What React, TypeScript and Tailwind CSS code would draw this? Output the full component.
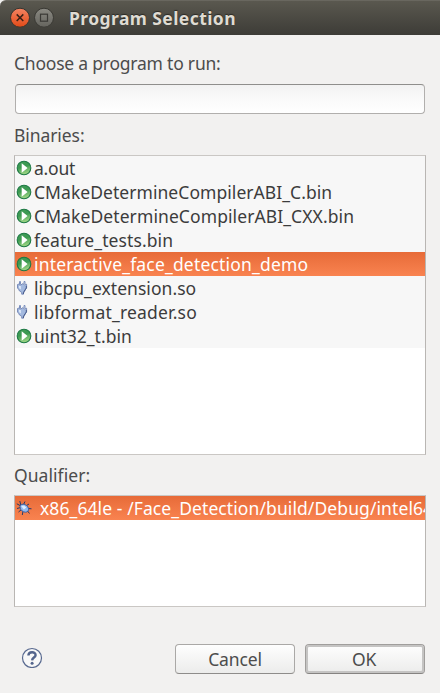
import { useId } from "react";

type Kind = "run" | "lib";
type Binary = { name: string; kind: Kind; spacing: string; selected?: boolean };

const binaries: Binary[] = [
  { name: "a.out", kind: "run", spacing: "tracking-[-0.2px]" },
  { name: "CMakeDetermineCompilerABI_C.bin", kind: "run", spacing: "tracking-[0.05px]" },
  { name: "CMakeDetermineCompilerABI_CXX.bin", kind: "run", spacing: "tracking-[0.09px]" },
  { name: "feature_tests.bin", kind: "run", spacing: "tracking-[0.1px]" },
  { name: "interactive_face_detection_demo", kind: "run", spacing: "tracking-[0.18px]", selected: true },
  { name: "libcpu_extension.so", kind: "lib", spacing: "tracking-[0.05px]" },
  { name: "libformat_reader.so", kind: "lib", spacing: "tracking-[0.2px]" },
  { name: "uint32_t.bin", kind: "run", spacing: "tracking-[0.05px]" },
];

function RunIcon() {
  const id = useId();
  return (
    <svg width="16" height="16" viewBox="0 0 16 16" className="shrink-0">
      <defs>
        <linearGradient id={id} x1="0" y1="0" x2="0.3" y2="1">
          <stop offset="0" stopColor="#3f9a58" />
          <stop offset="0.5" stopColor="#3c9a51" />
          <stop offset="1" stopColor="#9bd483" />
        </linearGradient>
      </defs>
      <circle cx="8" cy="8" r="6.8" fill={`url(#${id})`} stroke="#1d7944" strokeWidth="1.1" />
      <path d="M5.7 3.2 L11.6 8 L5.7 12.8 Z" fill="#fff" />
    </svg>
  );
}

function LibIcon() {
  return (
    <svg width="16" height="16" viewBox="0 0 16 16" className="shrink-0">
      <path
        d="M3.5 4 V1.5 H4.5 V4 M8 4 V1.5 H9 V4"
        fill="none"
        stroke="#7b8fbd"
      />
      <path
        d="M1.5 4.5 L3 4 L5 5 L6.2 3.8 L7.5 4 L8.5 5 L10.6 4.2 V8 L9.5 9.5 L8.5 11.5 L7.5 12 V14.2 H5.7 V12.3 L3.5 11 L2.6 9.3 L1.5 8 Z"
        fill="#a3b9df"
        stroke="#7386b4"
        strokeWidth="0.9"
      />
      <path d="M3 6 L4.8 6 V9.5 L3.2 8.2 Z" fill="#e2ecfb" />
      <path d="M10.3 6 V8 L8.2 11.2 L7.2 14" fill="none" stroke="#465989" />
    </svg>
  );
}

function BugIcon() {
  return (
    <svg width="16" height="16" viewBox="0 0 16 16" className="shrink-0">
      <path
        d="M4.8 5 L3.8 1 M7.5 4.5 L9 1.5 M4 5.5 L0.8 3.8 M4.5 7.5 L1 8.5 M5.5 9.5 L2.5 12 M7 11 L6.3 15 M10.5 5.5 L13 4 M12 8.5 L15.5 8.8 M11.5 11 L13.5 13.5"
        stroke="#243a6a"
        strokeWidth="1"
        fill="none"
      />
      <ellipse cx="8.3" cy="8.2" rx="4.7" ry="3.5" transform="rotate(38 8.3 8.2)" fill="#94b9ec" stroke="#3b5c9f" strokeWidth="0.9" />
      <path d="M5.2 5.9 L8 5.5 L10.4 7.6 L7.8 9.4 Z" fill="#dcedff" />
    </svg>
  );
}

const selectedRow = "bg-linear-to-b from-[#e76b38] to-[#f98350] text-white";

export default function App() {
  return (
    <div className="flex h-[693px] w-[440px] flex-col overflow-hidden bg-[#f2f1f0] font-['Noto_Sans',sans-serif] text-[17.5px] text-[#4c4c4c]">
      <header className="flex h-[35px] shrink-0 items-center rounded-tl-[6px] border-t border-[#69675f] bg-linear-to-b from-[#5a584f] to-[#3d3c37] pl-[10px]">
        <svg width="44" height="22" viewBox="0 0 44 22" className="shrink-0">
          <defs>
            <linearGradient id="close" x1="0" y1="0" x2="0" y2="1">
              <stop offset="0" stopColor="#f38463" />
              <stop offset="1" stopColor="#e34a17" />
            </linearGradient>
            <linearGradient id="max" x1="0" y1="0" x2="0" y2="1">
              <stop offset="0" stopColor="#8b8a83" />
              <stop offset="1" stopColor="#65645e" />
            </linearGradient>
          </defs>
          <circle cx="10" cy="10.7" r="9.5" fill="url(#close)" stroke="#37352f" />
          <path d="M6.7 7.4 L13.3 14 M13.3 7.4 L6.7 14" stroke="#3a2117" strokeWidth="1.5" />
          <circle cx="34" cy="10.7" r="9.5" fill="url(#max)" stroke="#3a3934" />
          <rect x="30.5" y="7.2" width="7" height="7" fill="none" stroke="#3b3a36" strokeWidth="1.2" />
        </svg>
        <h1 className="ml-[15px] whitespace-nowrap text-[17.5px] font-bold tracking-[0.42px] text-[#dfdbd2] [text-shadow:0_-1px_1px_#2b2a26]">
          Program Selection
        </h1>
      </header>

      <main className="flex flex-1 flex-col px-[14px]">
        <label className="mt-[16px] h-6 leading-6"><span className="tracking-[-0.22px]">Choose a program to run:</span></label>
        <input
          aria-label="Program"
          className="mx-px mt-[9px] h-[30px] shrink-0 rounded-[4px] border border-[#b1afad] border-t-[#8f8e8c] bg-linear-to-b from-[#f2f2f2] via-[#fafafa] to-white outline-none"
        />
        <div className="mt-[9px] h-6 leading-6"><span className="tracking-[-0.08px]">Binaries:</span></div>
        <ul className="mt-[8px] h-[300px] shrink-0 border border-[#b9b6b3] border-y-[#cac7c4] bg-white">
          {binaries.map((b) => (
            <li
              key={b.name}
              className={`flex h-6 items-center gap-[2px] pl-px leading-6 ${b.selected ? selectedRow : "bg-[#f7f7f7] text-[#3c3c3c]"}`}
            >
              {b.kind === "run" ? <RunIcon /> : <LibIcon />}
              <span className={`whitespace-nowrap ${b.spacing}`}>{b.name}</span>
            </li>
          ))}
        </ul>
        <div className="mt-[8px] h-6 leading-6"><span className="tracking-[0.05px]">Qualifier:</span></div>
        <div className="mt-[8px] h-[112px] shrink-0 overflow-hidden border border-[#b9b6b3] border-y-[#cac7c4] bg-white">
          <div className={`flex h-6 items-center gap-[8px] overflow-hidden pl-px leading-6 ${selectedRow}`}>
            <BugIcon />
            <span className="whitespace-nowrap tracking-[0.09px]">x86_64le - /Face_Detection/build/Debug/intel64</span>
          </div>
        </div>
        <footer className="mt-[37px] flex h-[30px] items-center pr-px pl-[7px]">
          <svg width="22" height="22" viewBox="0 0 22 22" className="mt-[-4px]">
            <circle cx="11" cy="12" r="9.5" fill="#f8f8f8" stroke="#58698f" strokeWidth="1.2" />
            <path d="M7.4 9.6 C7.4 5.2 14.8 5.2 14.6 9.1 C14.5 11.7 11.2 11.5 11.1 14.4" fill="none" stroke="#53648c" strokeWidth="2.4" />
            <circle cx="11.1" cy="17.3" r="1.5" fill="#53648c" />
          </svg>
          <button className="ml-auto h-[30px] w-[120px] rounded-[4px] border border-[#aaa8a6] border-b-[#8e8c8a] bg-linear-to-b from-[#fefefe] to-[#ececeb] leading-[28px]">
            <span className="tracking-[-0.15px]">Cancel</span>
          </button>
          <button className="ml-[10px] h-[30px] w-[120px] rounded-[4px] border border-[#a09e9c] border-b-[#858381] bg-linear-to-b from-[#fefefe] to-[#ececeb] pr-[2px] leading-[28px] shadow-[inset_0_0_0_2px_#c5c4c3]">
            <span className="tracking-[-0.3px]">OK</span>
          </button>
        </footer>
      </main>
    </div>
  );
}
